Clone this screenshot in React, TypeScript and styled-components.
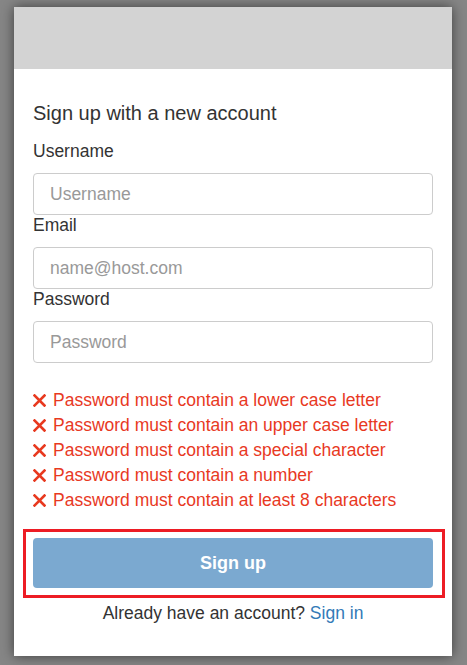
import React from "react";
import styled, { createGlobalStyle } from "styled-components";

const Global = createGlobalStyle`
  html, body { margin: 0; padding: 0; }
  body {
    background: #868686;
    font-family: "Liberation Sans", Arial, sans-serif;
    color: #333;
  }
  * { box-sizing: border-box; }
`;

const Page = styled.div`
  padding: 7px 15px 9px 14px;
`;

const Card = styled.div`
  width: 438px;
  height: 649px;
  background: #fff;
  box-shadow: 0 0 12px rgba(0, 0, 0, 0.55);
  display: flex;
  flex-direction: column;
`;

const Header = styled.div`
  height: 62px;
  background: #d3d3d3;
`;

const Body = styled.div`
  padding: 33px 19px 0 19px;
  display: flex;
  flex-direction: column;
`;

const Title = styled.h1`
  margin: 0 0 17px 0;
  font-size: 20px;
  line-height: 22px;
  font-weight: 400;
  color: #333;
`;

const Group = styled.div`
  display: flex;
  flex-direction: column;
`;

const Label = styled.label`
  font-size: 17.5px;
  line-height: 20px;
  margin-bottom: 12px;
  color: #333;
`;

const Input = styled.input`
  height: 42px;
  width: 100%;
  border: 1px solid #ccc;
  border-radius: 4px;
  padding: 0 16px;
  font-family: "Liberation Sans", Arial, sans-serif;
  font-size: 17.5px;
  color: #333;
  outline: none;
  &::placeholder { color: #999; }
`;

const Errors = styled.ul`
  list-style: none;
  margin: 25px 0 0 0;
  padding: 0;
`;

const ErrorItem = styled.li`
  display: flex;
  align-items: center;
  height: 25px;
  font-size: 17.5px;
  color: #e8391f;
`;

const XIcon = styled.svg`
  width: 13px;
  height: 13px;
  margin-right: 7px;
  flex: none;
`;

const Highlight = styled.div`
  margin: 16px -12px 0 -10px;
  border: 3px solid #ed1c24;
  padding: 6px 9px 7px 7px;
`;

const Button = styled.button`
  width: 100%;
  height: 50px;
  border: none;
  border-radius: 4px;
  background: #7ba9d0;
  color: #fff;
  font-family: "Liberation Sans", Arial, sans-serif;
  font-weight: 700;
  font-size: 18px;
`;

const Footer = styled.p`
  margin: 5px 0 0 0;
  text-align: center;
  font-size: 17.5px;
  line-height: 20px;
  color: #333;
`;

const Link = styled.a`
  color: #337ab7;
  text-decoration: none;
`;

const errors = [
  "Password must contain a lower case letter",
  "Password must contain an upper case letter",
  "Password must contain a special character",
  "Password must contain a number",
  "Password must contain at least 8 characters",
];

const Cross = () => (
  <XIcon viewBox="0 0 13 13">
    <path d="M1.5 1.5 L11.5 11.5 M11.5 1.5 L1.5 11.5" stroke="#e8391f" strokeWidth="2.6" strokeLinecap="square" fill="none" />
  </XIcon>
);

export default function App() {
  return (
    <>
      <Global />
      <Page>
        <Card>
          <Header />
          <Body>
            <Title>Sign up with a new account</Title>
            <Group>
              <Label>Username</Label>
              <Input placeholder="Username" />
            </Group>
            <Group>
              <Label>Email</Label>
              <Input placeholder="name@host.com" />
            </Group>
            <Group>
              <Label>Password</Label>
              <Input placeholder="Password" type="password" />
            </Group>
            <Errors>
              {errors.map((e) => (
                <ErrorItem key={e}>
                  <Cross />
                  {e}
                </ErrorItem>
              ))}
            </Errors>
            <Highlight>
              <Button>Sign up</Button>
            </Highlight>
            <Footer>
              Already have an account? <Link href="#">Sign in</Link>
            </Footer>
          </Body>
        </Card>
      </Page>
    </>
  );
}
